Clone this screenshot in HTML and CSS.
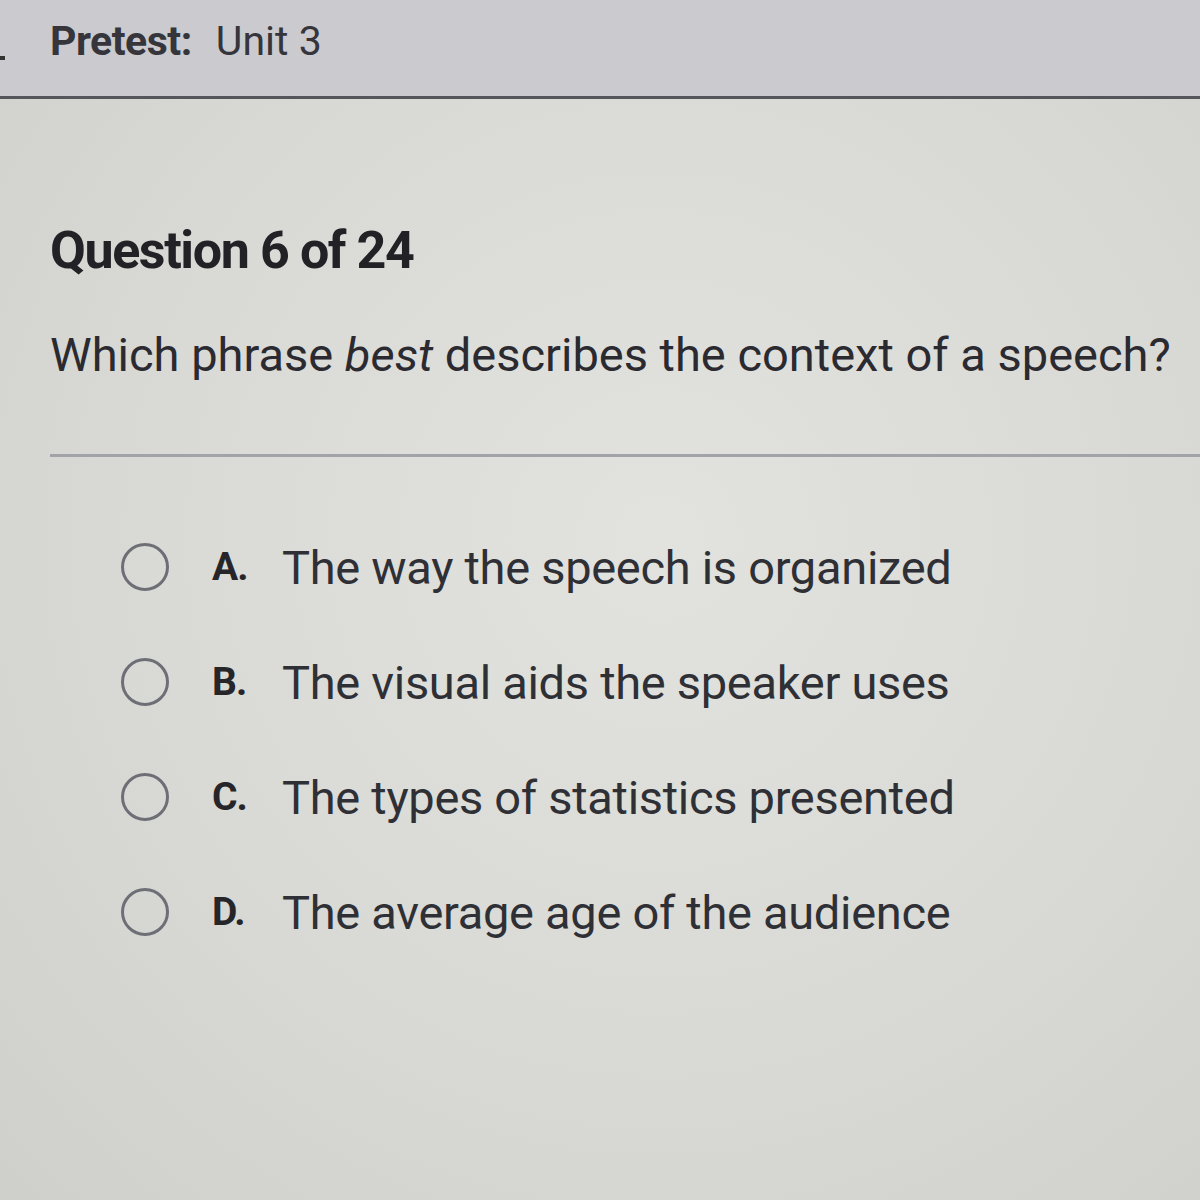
FILE: index.html
```html
<!DOCTYPE html>
<html>
<head>
<meta charset="utf-8">
<link rel="stylesheet" href="styles.css">
</head>
<body>
<header class="topbar">
  <span class="mark"></span>
  <span class="title"><b class="pre">Pretest:</b> Unit 3</span>
</header>
<main class="content">
  <h1 class="qnum">Question 6 of 24</h1>
  <p class="prompt">Which phrase <i>best</i> describes the context of a speech?</p>
  <hr class="divider">
  <ul class="options">
    <li class="opt"><span class="radio"></span><span class="letter">A.</span><span class="text">The way the speech is organized</span></li>
    <li class="opt"><span class="radio"></span><span class="letter">B.</span><span class="text">The visual aids the speaker uses</span></li>
    <li class="opt"><span class="radio"></span><span class="letter">C.</span><span class="text">The types of statistics presented</span></li>
    <li class="opt"><span class="radio"></span><span class="letter">D.</span><span class="text">The average age of the audience</span></li>
  </ul>
</main>
</body>
</html>
```
FILE: styles.css
```css
html, body {
  margin: 0;
  padding: 0;
}
body {
  width: 1200px;
  height: 1200px;
  overflow: hidden;
  font-family: Roboto, "Liberation Sans", sans-serif;
  color: #2a2a30;
  background: radial-gradient(ellipse at 55% 45%, #e2e2de 0%, #d9d9d5 55%, #cfcfcb 100%);
}
.topbar {
  height: 99px;
  background: #cacacf;
  border-bottom: 3px solid #55565c;
  display: flex;
  align-items: flex-start;
  padding-top: 17px;
  box-sizing: border-box;
  position: relative;
}
.mark {
  position: absolute;
  left: 0;
  top: 56px;
  width: 5px;
  height: 4px;
  background: #333;
}
.title {
  margin-left: 50px;
  font-size: 41px;
  color: #35353b;
}
.pre {
  font-weight: 700;
  margin-right: 14px;
  letter-spacing: -0.5px;
}
.content {
  padding: 0 0 0 50px;
}
.qnum {
  margin: 126px 0 0 0;
  font-size: 52px;
  font-weight: 700;
  letter-spacing: -1.4px;
  color: #222226;
  line-height: 1;
}
.prompt {
  margin: 54px 0 0 0;
  font-size: 47px;
  line-height: 1;
  color: #2a2a30;
  letter-spacing: 0px;
}
.divider {
  margin: 76px 0 0 0;
  border: 0;
  height: 3px;
  background: #a2a3a8;
}
.options {
  list-style: none;
  margin: 86px 0 0 71px;
  padding: 0;
  display: flex;
  flex-direction: column;
  gap: 67px;
}
.opt {
  display: flex;
  align-items: center;
  height: 48px;
}
.radio {
  width: 42px;
  height: 42px;
  border: 3px solid #6e6f76;
  border-radius: 50%;
  margin-right: 43px;
  flex: none;
}
.letter {
  font-weight: 700;
  font-size: 39px;
  width: 70px;
  color: #26262a;
  letter-spacing: -1px;
}
.text {
  font-size: 47px;
  color: #2f3036;
  letter-spacing: -0.3px;
}
```
